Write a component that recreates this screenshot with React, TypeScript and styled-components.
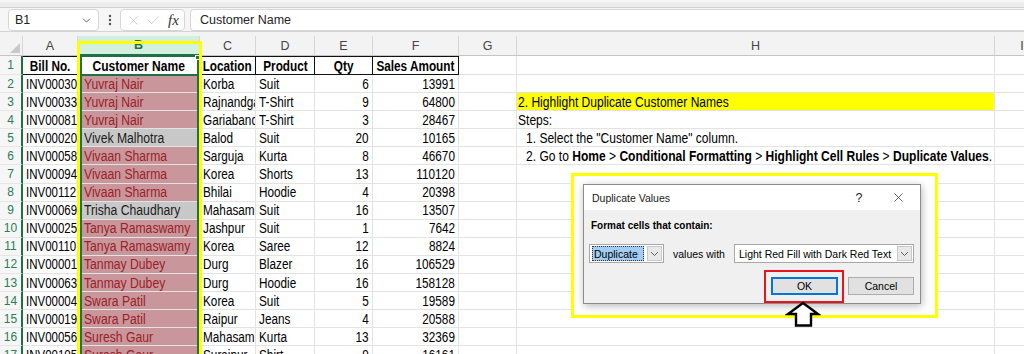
import React from 'react';
import styled, { createGlobalStyle } from 'styled-components';
import { ChevronDown, X, Check, EllipsisVertical } from 'lucide-react';

const SHEET_FONT = `"Liberation Sans", Arial, sans-serif`;
const UI_FONT = `"Liberation Sans", Arial, sans-serif`;
const COLS = '23px 55px 122px 56px 59px 58px 86px 58px 478px 55px 40px';
const GREEN = '#1e7145';
const GRID = '#e3e3e3';

const GlobalStyle = createGlobalStyle`
  html, body { margin: 0; padding: 0; background: #fff; overflow: hidden; }
  body { width: 1024px; height: 354px; }
  *, *::before, *::after { box-sizing: border-box; }
`;

type Align = 'left' | 'right' | 'center';
type Row = { id: string; name: string; loc: string; prod: string; qty: number; amt: number; dup: boolean };

const ROWS: Row[] = [
  { id: 'INV00030', name: 'Yuvraj Nair', loc: 'Korba', prod: 'Suit', qty: 6, amt: 13991, dup: true },
  { id: 'INV00033', name: 'Yuvraj Nair', loc: 'Rajnandgaon', prod: 'T-Shirt', qty: 9, amt: 64800, dup: true },
  { id: 'INV00081', name: 'Yuvraj Nair', loc: 'Gariaband', prod: 'T-Shirt', qty: 3, amt: 28467, dup: true },
  { id: 'INV00020', name: 'Vivek Malhotra', loc: 'Balod', prod: 'Suit', qty: 20, amt: 10165, dup: false },
  { id: 'INV00058', name: 'Vivaan Sharma', loc: 'Sarguja', prod: 'Kurta', qty: 8, amt: 46670, dup: true },
  { id: 'INV00094', name: 'Vivaan Sharma', loc: 'Korea', prod: 'Shorts', qty: 13, amt: 110120, dup: true },
  { id: 'INV00112', name: 'Vivaan Sharma', loc: 'Bhilai', prod: 'Hoodie', qty: 4, amt: 20398, dup: true },
  { id: 'INV00069', name: 'Trisha Chaudhary', loc: 'Mahasamund', prod: 'Suit', qty: 16, amt: 13507, dup: false },
  { id: 'INV00025', name: 'Tanya Ramaswamy', loc: 'Jashpur', prod: 'Suit', qty: 1, amt: 7642, dup: true },
  { id: 'INV00110', name: 'Tanya Ramaswamy', loc: 'Korea', prod: 'Saree', qty: 12, amt: 8824, dup: true },
  { id: 'INV00001', name: 'Tanmay Dubey', loc: 'Durg', prod: 'Blazer', qty: 16, amt: 106529, dup: true },
  { id: 'INV00063', name: 'Tanmay Dubey', loc: 'Durg', prod: 'Hoodie', qty: 16, amt: 158128, dup: true },
  { id: 'INV00004', name: 'Swara Patil', loc: 'Korea', prod: 'Suit', qty: 5, amt: 19589, dup: true },
  { id: 'INV00019', name: 'Swara Patil', loc: 'Raipur', prod: 'Jeans', qty: 4, amt: 20588, dup: true },
  { id: 'INV00056', name: 'Suresh Gaur', loc: 'Mahasamund', prod: 'Kurta', qty: 13, amt: 32369, dup: true },
  { id: 'INV00105', name: 'Suresh Gaur', loc: 'Surajpur', prod: 'Shirt', qty: 9, amt: 16161, dup: true },
];

/* ---------- page & formula bar ---------- */

const Page = styled.div`
  position: relative;
  width: 1024px;
  height: 354px;
  overflow: hidden;
  background: #fff;
`;

const RibbonEdge = styled.div`
  height: 8px;
  background: #ededed;
  border-top: 2px solid #f8f8f8;
  border-bottom: 1px solid #d2d2d2;
`;

const FormulaBar = styled.div`
  display: flex;
  align-items: flex-start;
  height: 24px;
  padding-top: 1px;
  background: #f6f6f6;
  border-bottom: 1px solid #d4d4d4;
  font-family: ${UI_FONT};
  font-size: 12.5px;
  color: #242424;
`;

const NameBox = styled.div`
  margin-left: 8px;
  width: 91px;
  height: 22px;
  display: flex;
  align-items: center;
  justify-content: space-between;
  padding: 0 5px 0 6px;
  background: #fff;
  border: 1px solid #d6d6d6;
  border-radius: 4px;
`;

const Dots = styled.div`
  width: 21px;
  height: 22px;
  display: flex;
  align-items: center;
  justify-content: center;
  color: #555;
`;

const FxBox = styled.div`
  width: 65px;
  height: 22px;
  display: flex;
  align-items: center;
  gap: 5px;
  padding-left: 5px;
  background: #fff;
  border: 1px solid #d6d6d6;
  border-radius: 4px;
`;

const FxText = styled.span`
  font-family: "Liberation Serif", "DejaVu Serif", serif;
  font-style: italic;
  font-size: 15px;
  color: #333;
  margin-left: 2px;
`;

const FormulaInput = styled.div`
  margin-left: 5px;
  flex: 1;
  height: 22px;
  display: flex;
  align-items: center;
  padding-left: 9px;
  background: #fff;
  border: 1px solid #d6d6d6;
  border-right: none;
  border-radius: 4px 0 0 4px;
`;

/* ---------- sheet ---------- */

const Sheet = styled.div`
  width: 1100px;
`;

const ColHeaderRow = styled.div`
  display: grid;
  grid-template-columns: ${COLS};
  height: 24px;
  padding-top: 4px;
  background: #f3f3f3;
  font-family: ${UI_FONT};
  font-size: 12.5px;
  color: #454545;
`;

const ColHeader = styled.div<{ $selected?: boolean }>`
  display: flex;
  align-items: center;
  justify-content: center;
  height: 20px;
  border-right: 1px solid #d6d6d6;
  border-bottom: ${(p) => (p.$selected ? `2px solid ${GREEN}` : '1px solid #c4c4c4')};
  background: ${(p) => (p.$selected ? '#d2efdf' : 'transparent')};
  color: ${(p) => (p.$selected ? GREEN : '#454545')};
  font-weight: ${(p) => (p.$selected ? 600 : 400)};
`;

const Corner = styled.div`
  height: 20px;
  display: flex;
  align-items: flex-end;
  justify-content: flex-end;
  padding: 0 2px 2px 0;
  border-bottom: 1px solid #c4c4c4;
  border-right: 1px solid #d6d6d6;
`;

const SheetRow = styled.div<{ $h: number }>`
  display: grid;
  grid-template-columns: ${COLS};
  height: ${(p) => p.$h}px;
`;

const RowNum = styled.div`
  display: flex;
  align-items: center;
  justify-content: center;
  background: #f6f6f6;
  border-right: 2px solid ${GREEN};
  border-bottom: 1px solid #e6e6e6;
  font-family: ${UI_FONT};
  font-size: 12px;
  color: #2a7d56;
`;

const Cell = styled.div<{ $align?: Align }>`
  display: flex;
  align-items: center;
  justify-content: ${(p) => (p.$align === 'right' ? 'flex-end' : p.$align === 'center' ? 'center' : 'flex-start')};
  padding: 0 3px;
  border-right: 1px solid ${GRID};
  border-bottom: 1px solid ${GRID};
  font-family: ${SHEET_FONT};
  font-size: 14px;
  color: #000;
  white-space: nowrap;
  overflow: hidden;
`;

/* Excel's narrow sheet face: the regular face drawn narrower */
const Narrow = styled.span<{ $origin?: Align; $scale?: number }>`
  display: inline-block;
  flex-shrink: 0;
  white-space: nowrap;
  transform: scaleX(${(p) => p.$scale ?? 0.84});
  transform-origin: ${(p) => p.$origin ?? 'left'} center;
`;

const TitleCell = styled(Cell)<{ $active?: boolean }>`
  justify-content: center;
  font-weight: 700;
  background: ${(p) => (p.$active ? '#fff' : 'transparent')};
  border-top: 1px solid #111;
  border-right: 1px solid #111;
  border-bottom: 1px solid #111;
`;

const NameCell = styled(Cell)<{ $tone: 'dup' | 'plain' }>`
  padding-left: 6px;
  background: ${(p) => (p.$tone === 'dup' ? '#c8969b' : '#c8c8c8')};
  color: ${(p) => (p.$tone === 'dup' ? '#9b2127' : '#1b1b1b')};
`;

const NoteCell = styled(Cell)<{ $highlight?: boolean; $indent?: boolean }>`
  padding-left: ${(p) => (p.$indent ? '9px' : '1px')};
  background: ${(p) => (p.$highlight ? '#ffff00' : 'transparent')};
  b { font-weight: 700; }
`;

/* ---------- overlays ---------- */

const YellowColumnFrame = styled.div`
  position: absolute;
  left: 77px;
  top: 41px;
  width: 125px;
  height: 340px;
  border: 3px solid #ffff00;
  pointer-events: none;
`;

const SelectionFrame = styled.div`
  position: absolute;
  left: 80px;
  top: 56px;
  width: 119px;
  height: 320px;
  border-left: 2px solid ${GREEN};
  border-right: 2px solid ${GREEN};
  pointer-events: none;
`;

const ActiveCellFrame = styled.div`
  position: absolute;
  left: 80px;
  top: 55px;
  width: 119px;
  height: 21px;
  border: 2px solid ${GREEN};
  pointer-events: none;
  &::after {
    content: '';
    position: absolute;
    right: -3px;
    top: -2px;
    width: 5px;
    height: 5px;
    background: ${GREEN};
    border: 1px solid #fff;
  }
`;

const DialogFrame = styled.div`
  position: absolute;
  left: 571px;
  top: 173px;
  padding: 8px 14px 11px 9px;
  background: #fff;
  border: 3px solid #ffff00;
`;

const Dialog = styled.div`
  width: 338px;
  border: 1px solid #8c8c8c;
  background: #f0f0f0;
  box-shadow: 1px 2px 8px rgba(0, 0, 0, 0.28);
  font-family: ${UI_FONT};
  font-size: 10.5px;
  color: #000;
`;

const TitleBar = styled.div`
  height: 25px;
  display: flex;
  align-items: center;
  padding: 0 7px 0 8px;
  background: #fff;
`;

const TitleText = styled.span`
  flex: 1;
  color: #1a1a1a;
`;

const HelpMark = styled.span`
  width: 14px;
  text-align: center;
  font-size: 12.5px;
  margin-right: 17px;
  color: #222;
`;

const CloseBtn = styled.span`
  width: 30px;
  display: flex;
  justify-content: center;
  color: #222;
`;

const DialogBody = styled.div`
  padding: 0 6px 0 5px;
`;

const FieldLabel = styled.div`
  margin-top: 9px;
  padding-left: 2px;
  line-height: 14px;
  font-weight: 700;
  font-size: 10px;
`;

const SelectRow = styled.div`
  margin-top: 11px;
  height: 19px;
  display: flex;
  align-items: center;
  white-space: nowrap;
`;

const Combo = styled.div<{ $w: number }>`
  flex: 0 0 ${(p) => p.$w}px;
  width: ${(p) => p.$w}px;
  height: 19px;
  display: flex;
  align-items: center;
  padding: 1px 1px 1px 2px;
  background: #fff;
  border: 1px solid #a8a8a8;
  overflow: hidden;
`;

const ComboValue = styled.div<{ $focused?: boolean }>`
  flex: 1;
  height: 100%;
  display: flex;
  align-items: center;
  padding-left: 2px;
  background: ${(p) => (p.$focused ? '#a3cdf2' : 'transparent')};
  outline: ${(p) => (p.$focused ? '1px dotted #333' : 'none')};
  outline-offset: -1px;
  margin-right: 3px;
  overflow: hidden;
`;

const ComboArrow = styled.div`
  flex: 0 0 15px;
  height: 100%;
  display: flex;
  align-items: center;
  justify-content: center;
  background: #e8e8e8;
  border: 1px solid #c9c9c9;
`;

const InlineLabel = styled.span`
  flex: 0 0 auto;
  margin: 0 9px 0 9px;
`;

const ButtonRow = styled.div`
  margin-top: 7px;
  display: flex;
  justify-content: flex-end;
  align-items: flex-start;
  gap: 4px;
`;

const RedHighlight = styled.div`
  border: 2px solid #e5161f;
  padding: 5px 4px 6px 5px;
`;

const DlgButton = styled.button<{ $primary?: boolean; $w: number }>`
  width: ${(p) => p.$w}px;
  height: 18px;
  margin-top: ${(p) => (p.$primary ? 0 : 7)}px;
  padding: 0;
  background: #e1e1e1;
  border: 1px solid ${(p) => (p.$primary ? '#0078d7' : '#adadad')};
  box-shadow: ${(p) => (p.$primary ? 'inset 0 0 0 1px #0078d7' : 'none')};
  font-family: ${UI_FONT};
  font-size: 10.5px;
  color: #000;
`;

const ArrowMark = styled.svg`
  position: absolute;
  left: 785px;
  top: 301px;
`;

const MiniChevron = () => (
  <svg width="9" height="6" viewBox="0 0 9 6">
    <polyline points="1,1 4.5,4.5 8,1" fill="none" stroke="#606060" strokeWidth="1" />
  </svg>
);

const noteFor = (rowNo: number): { node: React.ReactNode; highlight?: boolean; indent?: boolean } | null => {
  switch (rowNo) {
    case 3:
      return { node: '2. Highlight Duplicate Customer Names', highlight: true };
    case 4:
      return { node: 'Steps:' };
    case 5:
      return { node: '1. Select the "Customer Name" column.', indent: true };
    case 6:
      return {
        indent: true,
        node: (
          <>
            2. Go to <b>Home</b> &gt; <b>Conditional Formatting</b> &gt; <b>Highlight Cell Rules</b> &gt;{' '}
            <b>Duplicate Values</b>.
          </>
        ),
      };
    default:
      return null;
  }
};

const LETTERS = ['A', 'B', 'C', 'D', 'E', 'F', 'G', 'H', 'I', 'J'];

export default function App() {
  return (
    <>
      <GlobalStyle />
      <Page>
        <RibbonEdge />
        <FormulaBar>
          <NameBox>
            <span>B1</span>
            <ChevronDown size={13} strokeWidth={1.6} color="#555" />
          </NameBox>
          <Dots>
            <EllipsisVertical size={14} strokeWidth={2.2} />
          </Dots>
          <FxBox>
            <X size={15} strokeWidth={1.1} color="#bcbcbc" />
            <Check size={15} strokeWidth={1.1} color="#bcbcbc" />
            <FxText>fx</FxText>
          </FxBox>
          <FormulaInput>Customer Name</FormulaInput>
        </FormulaBar>

        <Sheet>
          <ColHeaderRow>
            <Corner>
              <svg width="10" height="10" viewBox="0 0 10 10">
                <polygon points="10,0 10,10 0,10" fill="#c9c9c9" />
              </svg>
            </Corner>
            {LETTERS.map((l) => (
              <ColHeader key={l} $selected={l === 'B'}>
                {l}
              </ColHeader>
            ))}
          </ColHeaderRow>

          <SheetRow $h={19}>
            <RowNum>1</RowNum>
            <TitleCell><Narrow $origin="center">Bill No.</Narrow></TitleCell>
            <TitleCell $active><Narrow $origin="center" $scale={0.86}>Customer Name</Narrow></TitleCell>
            <TitleCell><Narrow $origin="center">Location</Narrow></TitleCell>
            <TitleCell><Narrow $origin="center">Product</Narrow></TitleCell>
            <TitleCell><Narrow $origin="center">Qty</Narrow></TitleCell>
            <TitleCell><Narrow $origin="center">Sales Amount</Narrow></TitleCell>
            <Cell />
            <Cell />
            <Cell />
            <Cell />
          </SheetRow>

          {ROWS.map((r, i) => {
            const rowNo = i + 2;
            const note = noteFor(rowNo);
            return (
              <SheetRow key={r.id} $h={18.1}>
                <RowNum>{rowNo}</RowNum>
                <Cell><Narrow $scale={0.82}>{r.id}</Narrow></Cell>
                <NameCell $tone={r.dup ? 'dup' : 'plain'}><Narrow $scale={0.87}>{r.name}</Narrow></NameCell>
                <Cell><Narrow>{r.loc}</Narrow></Cell>
                <Cell><Narrow>{r.prod}</Narrow></Cell>
                <Cell $align="right"><Narrow $origin="right">{r.qty}</Narrow></Cell>
                <Cell $align="right"><Narrow $origin="right">{r.amt}</Narrow></Cell>
                <Cell />
                <NoteCell $highlight={note?.highlight} $indent={note?.indent}>
                  {note && <Narrow $scale={0.86}>{note.node}</Narrow>}
                </NoteCell>
                <Cell />
                <Cell />
              </SheetRow>
            );
          })}
        </Sheet>

        <SelectionFrame />
        <ActiveCellFrame />
        <YellowColumnFrame />

        <DialogFrame>
          <Dialog>
            <TitleBar>
              <TitleText>Duplicate Values</TitleText>
              <HelpMark>?</HelpMark>
              <CloseBtn>
                <X size={15} strokeWidth={1.1} />
              </CloseBtn>
            </TitleBar>
            <DialogBody>
              <FieldLabel>Format cells that contain:</FieldLabel>
              <SelectRow>
                <Combo $w={75}>
                  <ComboValue $focused>Duplicate</ComboValue>
                  <ComboArrow>
                    <MiniChevron />
                  </ComboArrow>
                </Combo>
                <InlineLabel>values with</InlineLabel>
                <Combo $w={180}>
                  <ComboValue>Light Red Fill with Dark Red Text</ComboValue>
                  <ComboArrow>
                    <MiniChevron />
                  </ComboArrow>
                </Combo>
              </SelectRow>
              <ButtonRow>
                <RedHighlight>
                  <DlgButton $primary $w={67}>
                    OK
                  </DlgButton>
                </RedHighlight>
                <DlgButton $w={66}>Cancel</DlgButton>
              </ButtonRow>
            </DialogBody>
          </Dialog>
        </DialogFrame>

        <ArrowMark width="36" height="27" viewBox="0 0 36 27">
          <polygon
            points="18,2 33,13 26,13 26,24.5 11,24.5 11,13 3,13"
            fill="#fff"
            stroke="#000"
            strokeWidth="2.4"
            strokeLinejoin="miter"
          />
        </ArrowMark>
      </Page>
    </>
  );
}
